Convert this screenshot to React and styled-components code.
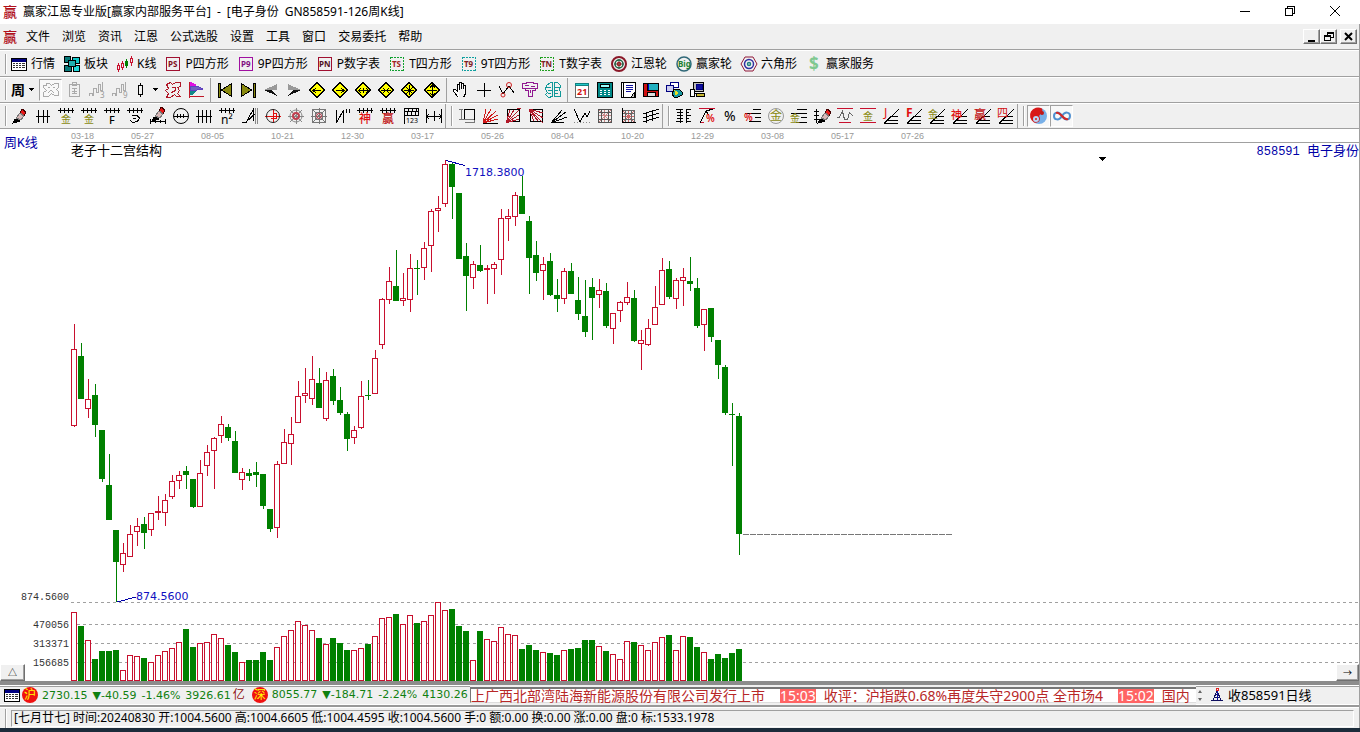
import React from 'react';
import styled, { createGlobalStyle, css } from 'styled-components';

const RED = '#c8102e';
const GREEN = '#008000';
const BLUE = '#0000a8';
const OLIVE = '#8a8a10';
const INK = '#000';
const GREY = '#a0a0a0';
const UI_FONT = '"Noto Sans", "Noto Sans CJK SC", sans-serif';
const MONO_FONT = '"Liberation Mono", "Noto Sans CJK SC", monospace';
const NUM_FONT = '"DejaVu Sans", "Noto Sans CJK SC", sans-serif';

const GlobalStyle = createGlobalStyle`
  *, *::before, *::after { box-sizing: border-box; }
  body { margin: 0; background: #1c2b3a; font-family: ${UI_FONT}; font-size: 12px; line-height: 16px; color: #000; }
  button { font: inherit; color: inherit; }
`;

/* ---------- frame ---------- */

const Frame = styled.div`
  display: flex;
  flex-direction: column;
  background: #f0f0f0;
`;

const Body = styled.div`
  border-right: 1px solid ${GREY};
`;

const TitleBar = styled.header`
  display: flex;
  align-items: center;
  height: 24px;
  padding: 0 3px;
  background: #fff;
`;

const Logo = styled.span`
  width: 20px;
  font-size: 14px;
  font-weight: 500;
  color: #b0101c;
`;

const Title = styled.h1`
  display: flex;
  flex: 1;
  gap: 6px;
  margin: 0;
  font-size: 12px;
  font-weight: 400;
  white-space: nowrap;
`;

const PlainButton = styled.button`
  display: inline-flex;
  align-items: center;
  justify-content: center;
  padding: 0;
  border: 0;
  background: none;
  white-space: nowrap;
`;

const WindowButton = styled(PlainButton)`
  width: 45px;
  height: 22px;
`;

const MenuBar = styled.nav`
  display: flex;
  align-items: center;
  height: 26px;
  padding: 0 2px 0 3px;
  border-bottom: 1px solid ${GREY};
`;

const MenuList = styled.div`
  display: flex;
  flex: 1;
  gap: 12px;
  padding-left: 3px;
`;

const ChildButtons = styled.div`
  display: flex;
  gap: 3px;
`;

const RaisedGroup = styled.div`
  display: flex;
`;

const RaisedButton = styled(PlainButton)`
  width: ${(p) => p.$w || 17}px;
  height: ${(p) => p.$h || 15}px;
  background: #f0f0f0;
  border: 1px solid;
  border-color: #fff #707070 #707070 #fff;
  box-shadow: inset -1px -1px 0 ${GREY};
`;

/* ---------- toolbars ---------- */

const ToolBar = styled.div`
  display: flex;
  align-items: center;
  height: ${(p) => p.$h || 26}px;
  padding-left: 5px;
  border-top: 1px solid #fff;
  border-bottom: 1px solid ${GREY};
`;

const Grip = styled.i`
  width: 2px;
  height: 20px;
  margin-right: ${(p) => p.$after || 1}px;
  border-left: 1px solid ${GREY};
  border-right: 1px solid #fff;
`;

const LabelButtons = styled.div`
  display: flex;
  gap: 8px;
`;

const LabelButton = styled(PlainButton)`
  gap: 3px;
`;

const ToolButton = styled(PlainButton)`
  width: 23px;
  height: 22px;
  ${(p) => p.$down && css`
    background: #f8f8f8;
    border: 1px solid;
    border-color: ${GREY} #fff #fff ${GREY};
  `}
`;

const DropButton = styled(PlainButton)`
  width: ${(p) => p.$w}px;
  height: 22px;
  justify-content: flex-start;
  gap: 3px;
  font-size: 14px;
  font-weight: 700;
`;

const Separator = styled.i`
  width: 6px;
  height: 24px;
  padding-left: 3px;
  &::after { content: ''; display: block; height: 100%; border-left: 1px solid ${GREY}; }
`;

const BandBreak = styled.span`
  display: flex;
  align-items: center;
  justify-content: space-between;
  width: 10px;
  height: 24px;
  border-left: 1px solid ${GREY};
  padding: 0 1px 0 5px;
  &::after { content: ''; width: 2px; height: 20px; border-left: 1px solid ${GREY}; border-right: 1px solid #fff; }
`;

const Glyph = styled.svg`
  flex: none;
  overflow: visible;
`;

/* ---------- chart ---------- */

const ChartPanel = styled.main`
  position: relative;
  background: #fff;
`;

const ChartSvg = styled.svg`
  display: block;
  width: 100%;
  height: 552px;
`;

const Corner = styled(RaisedButton)`
  position: absolute;
  bottom: 0;
  font-size: 9px;
  ${(p) => (p.$right ? 'right: 0;' : 'left: 0;')}
`;

/* ---------- status rows ---------- */

const QuoteBar = styled.section`
  display: flex;
  align-items: stretch;
  height: 26px;
  border-top: 4px solid #8c8c8c;
  border-bottom: 2px solid #999;
  overflow: hidden;
`;

const QuoteCell = styled.div`
  display: flex;
  align-items: center;
  width: ${(p) => p.$w}px;
  padding-left: ${(p) => p.$pad}px;
  border-top: 1px solid #fff;
  border-bottom: 1px solid #fff;
  box-shadow: inset 0 1px 0 ${GREY};
  overflow: hidden;
  white-space: nowrap;
`;

const Market = styled.span`
  display: inline-flex;
  align-items: center;
  justify-content: center;
  flex: none;
  width: 16px;
  height: 16px;
  margin: 0 4px 0 ${(p) => p.$before}px;
  border-radius: 50%;
  background: #f01010;
  color: #ff0;
  font-size: 12px;
`;

const Quote = styled.span`
  display: flex;
  flex: none;
  align-items: baseline;
  gap: 5px;
  font-family: ${NUM_FONT};
  font-size: 11px;
  color: #108010;
`;

const Unit = styled.span`
  margin-left: 2px;
  font-size: 12px;
  color: #901010;
`;

const Ticker = styled.div`
  display: flex;
  flex: 1;
  align-items: center;
  min-width: 0;
  margin: 2px 0;
  background: #fff;
  border-top: 2px solid #777;
  border-left: 1px solid #777;
  border-bottom: 1px solid #ddd;
  font-size: 14px;
  line-height: 14px;
  color: #b82828;
  white-space: nowrap;
`;

const News = styled.a`
  color: inherit;
  text-decoration: none;
  margin-right: 15px;
`;

const Time = styled.time`
  margin-right: 8px;
  background: #ff6464;
  color: #fff;
`;

const Feed = styled.span`
  margin-left: 2px;
  font-size: 13px;
`;

const InfoBar = styled.footer`
  display: flex;
  align-items: center;
  height: 21px;
  padding: 2px 5px 1px;
  border-top: 1px solid #fff;
`;

const InfoText = styled.div`
  flex: 1;
  height: 17px;
  margin-left: 3px;
  padding-left: 2px;
  border: 1px solid;
  border-color: ${GREY} #fff #fff ${GREY};
  line-height: 14px;
  white-space: pre;
`;

const Edge = styled.div`
  height: 4px;
  background: #1c2b3a;
`;

/* ---------- icons: strokes [colour, path, fill] and letters [text, x, y, size, colour] ---------- */

const COMB = [INK, 'M1 3.5H17M3.5 1V6M7.5 1V6M11.5 1V6M15.5 1V6'];
const FAN = [INK, 'M2 16.5H16M5 13.5H16M9 9.5H16M2 16.5L17 2'];
const diamond = ['#000', 'M9 1.5L16.5 9L9 16.5L1.5 9Z', '#ff0'];
const pencil = (dx, dy) => [
  [`#400`, `M${11 + dx} ${1 + dy}L${15 + dx} ${4 + dy}L${13 + dx} ${8 + dy}L${9 + dx} ${5 + dy}Z`, '#e81818'],
  ['#777', `M${9 + dx} ${5 + dy}L${13 + dx} ${8 + dy}L${10 + dx} ${12 + dy}L${5 + dx} ${10 + dy}Z`, '#d8b8b8'],
  ['#000', `M${4 + dx} ${11 + dy}L${9 + dx} ${13 + dy}L${2 + dx} ${15 + dy}Z`, '#000'],
];

const ICONS = {
  grid: { s: [['#000', 'M1.5 3.5H16.5V15.5H1.5Z', '#fff'], ['#000080', 'M2 5H16', 'none'], ['#000080', 'M2 4.5H16M2 5.5H16M2 6.5H16'], ['#333', 'M3 8.5H5M6 8.5H8M9 8.5H11M12 8.5H15M3 10.5H5M6 10.5H8M9 10.5H11M12 10.5H15M3 12.5H5M6 12.5H8M9 12.5H11M12 12.5H15']] },
  blocks: { s: [['#000', 'M1.5 1.5H7.5V7.5H1.5Z', '#087878'], ['#000', 'M9.5 2.5H16.5V8.5H9.5Z', '#10c8c8'], ['#000', 'M1.5 10.5H8.5V16.5H1.5Z', '#087878'], ['#000', 'M10.5 10.5H16.5V16.5H10.5Z', '#20d8d8'], ['#000', 'M5.5 5.5H12.5V11.5H5.5Z', '#20b0b0']] },
  kline: { s: [[RED, 'M2.5 8V17M6.5 6V15'], [RED, 'M1.5 10.5H3.5V14.5H1.5ZM5.5 8.5H7.5V12.5H5.5Z', '#f0f0f0'], [GREEN, 'M10.5 4V13M9.5 6.5H11.5V10.5H9.5Z'], [RED, 'M15.5 1V11'], [RED, 'M14.5 3.5H16.5V7.5H14.5Z', '#f0f0f0']] },
  PS: { s: [['#a01030', 'M2.5 2.5H15.5V15.5H2.5Z']], t: [['PS', 4, 12, 8, '#801020', 700]] },
  P9: { s: [['#a010a0', 'M2.5 2.5H15.5V15.5H2.5Z']], t: [['P9', 4, 12, 8, '#801080', 700]] },
  PN: { s: [['#a01030', 'M2.5 2.5H15.5V15.5H2.5Z']], t: [['PN', 3, 12, 8, '#501020', 700]] },
  TS: { s: [['#10a030', 'M2.5 2.5H15.5V15.5H2.5Z', 'none', '2 1']], t: [['TS', 4, 12, 8, '#a02020', 700]] },
  T9: { s: [['#10a0a0', 'M2.5 2.5H15.5V15.5H2.5Z', 'none', '2 1']], t: [['T9', 4, 12, 8, '#802020', 700]] },
  TN: { s: [['#20a020', 'M2.5 2.5H15.5V15.5H2.5Z', 'none', '2 1']], t: [['TN', 3, 12, 8, '#802020', 700]] },
  wheel: { smooth: 1, c: [[9, 9, 7, '#8a1828', 2], [9, 9, 4, '#206040', 1.5], [9, 9, 1.5, '#a02020', 1.5]], s: [['#555', 'M9 4V14M4 9H14']] },
  big: { smooth: 1, c: [[9, 9, 7, '#306878', 1.5]], t: [['Big', 3, 12, 8, '#208030', 700]] },
  hex: { smooth: 1, s: [['#901838', 'M5 2H13L17 9L13 16H5L1 9Z']], c: [[9, 9, 4.5, '#3030a0', 1.5], [9, 9, 1.5, '#208080', 1.5]] },
  dollar: { t: [['$', 4, 15, 17, '#80c890', 700]] },

  knot: { s: [['#aaa', 'M4.5 2.5H7.5L9.5 4.5L12.5 2.5H16.5V6.5L14.5 8.5L16.5 10.5V14.5H12.5L9.5 12.5L6.5 15.5H1.5V11.5L4.5 9.5L1.5 6.5V4.5H4.5ZM6 6.5H8M11 6.5H13M6 11.5L9 9.5L12 11.5']] },
  clip: { s: [['#aaa', 'M4.5 3.5H14.5V15.5H4.5ZM7.5 1.5H11.5V4.5H7.5ZM7 7.5H12M7 10.5H12M9.5 7V13M7 12.5H12']] },
  wave3: { s: [['#aaa', 'M1.5 15V12.5H4.5V15M5.5 15V7.5H8.5V11.5H10.5V3.5H12.5V9.5H14.5V1']], t: [['3', 12, 17, 8, '#999']] },
  wave9: { s: [['#aaa', 'M1.5 15V12.5H4.5V15M5.5 15V7.5H8.5V11.5H10.5V3.5H12.5V9.5H14.5V1']], t: [['9', 12, 17, 8, '#999']] },
  candle: { s: [[INK, 'M9.5 2V16'], [INK, 'M7.5 4.5H11.5V13.5H7.5Z', '#f0f0f0']] },
  knotRed: { s: [['#b01828', 'M2.5 3.5L6.5 1.5L8.5 3.5L11.5 1.5H16.5V5.5L13.5 6.5L15.5 9.5L13.5 12.5L16.5 15.5H12.5L10.5 13.5L6.5 16.5H2.5L4.5 12.5L1.5 9.5L4.5 7.5ZM8 6.5H11.5V9.5L7.5 11.5']] },
  flag: { s: [['#e010e0', 'M3 1L9 4H3Z', '#e010e0'], ['#6040c0', 'M3 5H10L16 8L10 9H3Z', '#7060c0'], ['#108888', 'M3 10H9L6 13H3Z', '#108888'], ['#c01828', 'M2.5 1V17M2 15.5H17']] },
  first: { s: [[INK, 'M2 2H4V16H2Z', OLIVE], [INK, 'M15.5 2.5V15.5L5.5 9Z', OLIVE]] },
  last: { s: [[INK, 'M14 2H16V16H14Z', OLIVE], [INK, 'M2.5 2.5V15.5L12.5 9Z', OLIVE]] },
  prev: { f: [['#999', 'M15 3L2 9H15Z'], ['#111', 'M15 15L2 9H10Z']] },
  next: { f: [['#999', 'M3 3L16 9H3Z'], ['#111', 'M3 15L16 9H8Z']] },
  dLeft: { s: [diamond, [INK, 'M5 9.5H13M8 7L5 9.5L8 12']] },
  dRight: { s: [diamond, [INK, 'M5 9.5H13M10 7L13 9.5L10 12']] },
  dBoth: { s: [diamond, [INK, 'M4 9.5H14M7 7L5 9.5L7 12M12 7L14 9.5L12 12M9.5 7V12']] },
  dIn: { s: [diamond, [INK, 'M4 9.5H14M6 7L8 9.5L6 12M12 7L10 9.5L12 12']] },
  dStar: { s: [diamond, [INK, 'M4 9.5H14M9.5 4V14M6 6L13 13M13 6L6 13']] },
  dCross: { s: [diamond, [INK, 'M4 9.5H14M9.5 4V14M7 6.5L9.5 4L12 6.5M7 12L9.5 14L12 12']] },
  hand: { s: [[INK, 'M6.5 16.5L1.5 10.5V8.5H3.5L5.5 10.5V3.5H7.5V8.5M7.5 3V1.5H9.5V8M9.5 2.5H11.5V8M11.5 4.5H13.5V12.5L11.5 16.5', '#fff']] },
  plus: { s: [[INK, 'M9.5 2V16M2 9.5H16']] },
  peaks: { s: [[INK, 'M1 5L5 13L11 5L16 12']], c: [[5, 14, 2, '#d02020', 1], [11, 4, 2.5, '#d02020', 1]] },
  cloudP: { s: [['#901890', 'M1.5 2.5H5.5V1.5H12.5V2.5H16.5V7.5H14.5V9.5H11.5V15.5H7.5V9.5H4.5V7.5H1.5ZM4 4.5H8M10 5.5H14M4 7.5H14M9.5 9V12']] },
  cloudC: { s: [['#109898', 'M2.5 4.5L6.5 1.5H8.5V15.5L4.5 16.5L1.5 13.5L3.5 11.5L1.5 8.5ZM10.5 15.5V1.5H13.5L16.5 4.5L15.5 8.5L16.5 11.5V15.5ZM3 6.5H7M11 6.5H15M4 9.5H8M4 12.5H7M11 9.5H14M11 12.5H14']] },
  calendar: { s: [['#666', 'M2.5 3.5H15.5V16.5H2.5Z', '#fff'], ['#108080', 'M2.5 2.5H15.5V4.5H2.5Z', '#20c8c8']], t: [['21', 4, 14, 9, '#d01010', 700]] },
  calc: { s: [[INK, 'M1.5 1.5H16.5V16.5H1.5Z', '#088'], [INK, 'M4.5 3.5H13.5V6.5H4.5Z', '#9ff'], ['#fff', 'M4 9.5H6M8 9.5H10M12 9.5H14M4 11.5H6M8 11.5H10M12 11.5H14M4 13.5H6M8 13.5H10M12 13.5H14']] },
  note: { s: [[INK, 'M2.5 1.5H16.5V16.5H2.5Z', '#fff'], [INK, 'M4.5 2V16'], ['#1010a0', 'M7 4.5H14M7 6.5H14M7 8.5H14M7 10.5H12'], [INK, 'M15 16L12 16L15 12Z', '#ccc']] },
  save: { s: [[INK, 'M1.5 2.5H16.5V15.5H1.5Z', '#d01010'], ['#000', 'M5.5 2.5H16.5V9.5H5.5Z', '#20b0c0'], [INK, 'M5.5 11.5H13.5V15.5H5.5Z', '#ddd'], ['#0000c0', 'M6.5 3V9']] },
  net: { s: [['#000080', 'M5.5 1.5H13.5V6.5H5.5Z', '#fff'], ['#000080', 'M1.5 4.5H8.5V10.5H1.5Z', '#cce'], [INK, 'M9 8H14L17 11V14L13 16H9L7 13Z', '#1898a0'], ['#e8e020', 'M10 10L13 12L11 14Z', '#e8e020']] },
  pc: { s: [[INK, 'M5.5 1.5H15.5V10.5H5.5Z', '#bbb'], ['#000080', 'M8 3H14V8H8Z', '#1010a0'], [INK, 'M2.5 8.5H6.5V15.5H2.5Z', '#fff'], [INK, 'M8 12.5H16V15.5H9Z', '#c8b830']] },

  pencil: { s: pencil(0, 1) },
  ticks: { s: [[INK, 'M2 9.5H16M4.5 3V16M9.5 3V16M13.5 3V16']] },
  combGold: { s: [COMB], t: [['金', 4, 16, 10, OLIVE]] },
  combF: { s: [COMB], t: [['F', 6, 17, 11, INK, 500]] },
  combSpiral: { s: [COMB, [INK, 'M6 8.5H11L13.5 11L11.5 14.5L7 15.5L4 13.5M7 11.5H10']] },
  pencilRule: { s: [...pencil(1, -1), [INK, 'M1 14.5H17M1.5 12V17M16.5 12V17M6.5 13V16M11.5 13V16']] },
  dial: { c: [[9, 9, 7.5, INK, 1]], s: [[INK, 'M2 9.5H16M5.5 7V11M8.5 7V11M11.5 7V11']] },
  ticks4: { s: [[INK, 'M1 9.5H17M3.5 3V16M7.5 3V16M11.5 3V16M15.5 3V16']] },
  combN2: { s: [COMB], t: [['n²', 3, 17, 12, INK]] },
  angles: { s: [[INK, 'M1 15.5H5L12 3V14M5 15L15 6'], ['#888', 'M14.5 1V17M16.5 1V17']] },
  spiralRed: { c: [[9, 9, 6.5, '#222', 1]], s: [['#e01010', 'M1 9.5H17M9.5 2V16M9 6.5H12.5V11.5H7']] },
  webRound: { c: [[9, 9, 6, '#888', 1], [9, 9, 3, '#c04050', 2]], s: [['#888', 'M1 9.5H17M9.5 1V17M3 3L15 15M15 3L3 15']] },
  webSquare: { s: [['#777', 'M2.5 2.5H15.5V15.5H2.5ZM5.5 5.5H12.5V12.5H5.5ZM1 9.5H17M9.5 1V17M2 2L16 16M16 2L2 16']], c: [[9, 9, 2.5, '#c04050', 1]] },
  fork: { s: [[INK, 'M3.5 3V16L10.5 3V16M13.5 2V6M16.5 2V6']] },
  combShen: { s: [COMB], t: [['神', 3, 16, 12, '#e01010', 500]] },
  combYing: { s: [COMB], t: [['赢', 3, 16, 12, '#c01010', 500]] },
  comb123: { s: [[INK, 'M2 1.5H17M2.5 1V17M2 4.5H17M6.5 1V4M10.5 1V4M14.5 1V4M2 8.5H17M5.5 5V8M9.5 5V8M13.5 5V8M16.5 1V9']], t: [['123', 4, 16, 7, INK]] },
  span: { s: [[INK, 'M1.5 2V16M9.5 4V14M16.5 2V16M1 9.5H17M4 7L2 9.5L4 12M14 7L16 9.5L14 12']] },

  boxRule: { s: [[INK, 'M6.5 2.5H16.5V12.5H6.5Z'], ['#777', 'M1 2.5H5M3.5 2V13M1 12.5H16M7 15.5H16M16.5 13V16']] },
  fanRed: { s: [['#d01818', 'M2 16L5 2M2 16L10 2M2 16L15 4M2 16L17 8M2 16L17 12'], [INK, 'M2 16.5H17']] },
  fanBox: { s: [[INK, 'M3.5 2.5H15.5V14.5H3.5Z'], ['#b01828', 'M2 16L6 3M2 16L10 3M2 16L15 3M2 16L15 8M2 16L15 12'], ['#b01828', 'M13 2L17 1']] },
  fanBox2: { s: [[INK, 'M3.5 2.5H15.5V14.5H3.5Z'], ['#b01828', 'M2 2L16 16M2 2L16 11M2 2L16 6M2 2L11 14M2 2L7 14']] },
  fan: { s: [[INK, 'M1 16L12 3M1 16L16 5M1 16L17 10M1 15.5H14']] },
  zig: { s: [[INK, 'M1 2L7 15L12 6L14 10L17 4'], ['#888', 'M1 15.5H17', 'none', '1 2']] },
  gridRed: { s: [['#c88', 'M2 2L16 16M16 2L2 16M8.5 2V16M2 8.5H16'], ['#555', 'M2.5 2.5H15.5V15.5H2.5ZM5.5 2V16M12.5 2V16M2 5.5H16M2 12.5H16']] },
  gridRed2: { s: [['#c66', 'M3 3L16 16M16 3L3 16M9.5 3V15M3 9.5H16'], ['#666', 'M6.5 3V15M12.5 3V15M15.5 3V15M3 3.5H16M3 6.5H16M3 12.5H16'], [INK, 'M3.5 1V15.5H17']] },
  channels: { s: [[INK, 'M1 7L17 2M1 11L17 6M1 15L17 10M4.5 5V16M10.5 3V14']] },

  ladder: { s: [[INK, 'M5.5 2V16M11.5 2V16M1 2.5H8M2 5.5H8M2 8.5H8M2 11.5H8M1 14.5H8M11 2.5H16M11 5.5H14M11 8.5H16M11 11.5H14M11 14.5H16']] },
  pctA: { s: [[RED, 'M1 1.5H17M3 15.5H6'], [INK, 'M2 16L8 4L11 8M8 4L15 2']], t: [['%', 8, 15, 10, '#e01010', 600]] },
  pct: { t: [['%', 3, 14, 14, INK]] },
  pctLines: { s: [[INK, 'M9 2.5H17M1 6.5H17M11 10.5H17M5 14.5H17']], t: [['%', 0, 14, 10, '#e01010', 600]] },
  goldRound: { c: [[9, 9, 7.5, '#999', 1]], t: [['金', 3, 13, 12, OLIVE]] },
  goldLines: { s: [[INK, 'M7 2.5H17M1 6.5H17M11 10.5H17M6 15.5H17']], t: [['金', 0, 15, 10, OLIVE]] },
  rulePencil: { s: [[INK, 'M3.5 2V16M1 4.5H6M1 8.5H6M1 12.5H6'], ...pencil(3, 1)] },
  waveLines: { s: [[RED, 'M1 1.5H17M3 15.5H15'], ['#666', 'M1 10.5H3L6.5 4.5L8.5 12.5L11.5 12.5L13.5 5.5L17 9']] },
  goldRed: { s: [[RED, 'M1 1.5H17M1 15.5H17']], t: [['金', 4, 13, 10, OLIVE]] },
  fanJ: { s: [FAN], t: [['J', 2, 10, 12, '#e01010']] },
  fanF: { s: [FAN], t: [['F', 1, 10, 12, '#e01010', 700]] },
  fanGold: { s: [FAN], t: [['金', 0, 11, 10, OLIVE]] },
  fanShen: { s: [FAN], t: [['神', 0, 12, 11, '#e01010', 500]] },
  fanYing: { s: [FAN], t: [['赢', 0, 12, 12, '#c01010', 500]] },
  fanSi: { s: [FAN], t: [['四', 0, 10, 11, '#d01010']] },
  taiji: { smooth: 1, f: [['#78b0e8', 'M9 1A8 8 0 0 1 9 17A8 8 0 0 1 9 1Z'], ['#d81818', 'M12 1.5A8 8 0 0 0 4 15.5C9 17 11 12 9.500 10C8 7.500 14 6 12 1.500Z']], c: [[6, 12, 2, '#b8d8f8', 2], [12, 6, 1, '#c01818', 2]] },
  infinity: { smooth: 1, w: 2, s: [['#5090d0', 'M9 9C6 4 1 5 1 9S6 14 9 9'], ['#5090d0', 'M9 9C12 4 17 5 17 9S12 14 9 9'], ['#d02828', 'M3 6C8 4 10 14 15 12']] },

  min: { s: [[INK, 'M4 8.5H14']] },
  restore: { s: [[INK, 'M4.5 5.5H11.5V12.5H4.5ZM6.5 5V3.5H13.5V10.5H12']] },
  close: { smooth: 1, s: [[INK, 'M4 3L14 13M14 3L4 13']] },
  minSmall: { w: 2, s: [[INK, 'M5 13H12']] },
  restoreSmall: { s: [[INK, 'M4.5 7.5H10.5V12.5H4.5ZM4 8.5H11M7.5 7V4.5H13.5V9.5H11M7 5.5H14']] },
  closeSmall: { w: 2, smooth: 1, s: [[INK, 'M5 5L12 12M12 5L5 12']] },
  tower: { s: [['#101060', 'M9 5L5 14M9 5L13 14M6 11.5H12M7 8.5H11M3 14.5H15'], ['#e02020', 'M8 2H10V4H8Z'], ['#1010a0', 'M9.5 5V14']] },
  caret: { f: [[INK, 'M1 7H6L3.5 10Z']] },
};
ICONS.combGold2 = ICONS.combGold;

function Icon({ name, width = 18 }) {
  const { s = [], c = [], t = [], f = [], smooth, w = 1 } = ICONS[name];
  return (
    <Glyph width={width} height="18" viewBox={`0 0 ${width} 18`} aria-hidden="true" shapeRendering={smooth ? 'auto' : 'crispEdges'}>
      {f.map(([fill, d], i) => <path key={i} d={d} fill={fill} />)}
      {s.map(([stroke, d, fill = 'none', dash], i) => (
        <path key={i} d={d} stroke={stroke} fill={fill} strokeDasharray={dash} strokeWidth={w} />
      ))}
      {c.map(([cx, cy, r, stroke, sw], i) => (
        <circle key={i} cx={cx} cy={cy} r={r} stroke={stroke} strokeWidth={sw} fill="none" shapeRendering="auto" />
      ))}
      {t.map(([text, x, y, fs, fill, fw], i) => (
        <text key={i} x={x} y={y} fontSize={fs} fill={fill} fontWeight={fw || 400}>{text}</text>
      ))}
    </Glyph>
  );
}

const Tools = ({ names, down }) => names.map((n) => (
  <ToolButton key={n} type="button" aria-label={n} $down={down || n === 'knot'}><Icon name={n} /></ToolButton>
));

/* ---------- data ---------- */

const MENU = ['文件', '浏览', '资讯', '江恩', '公式选股', '设置', '工具', '窗口', '交易委托', '帮助'];

const VIEWS = [
  ['grid', '行情'], ['blocks', '板块'], ['kline', 'K线'], ['PS', 'P四方形'], ['P9', '9P四方形'], ['PN', 'P数字表'],
  ['TS', 'T四方形'], ['T9', '9T四方形'], ['TN', 'T数字表'], ['wheel', '江恩轮'], ['big', '赢家轮'], ['hex', '六角形'], ['dollar', '赢家服务'],
];

const DATES = [['03-18', 71], ['05-27', 131], ['08-05', 201], ['10-21', 271], ['12-30', 341], ['03-17', 411], ['05-26', 481],
  ['08-04', 551], ['10-20', 621], ['12-29', 691], ['03-08', 761], ['05-17', 831], ['07-26', 901]];

const LEVELS = [['874.5600', 602, 600], ['470056', 624, 628], ['313371', 643, 647], ['156685', 662, 666]];

/* direction, high, body top, body bottom, low, volume top */
const BARS = `r 324 349 426 427 612|g 343 356 399 399 626|r 379 399 409 418 640|g 384 395 425 437 659|g 430 430 479 482 651|g 454 485 520 520 651
g 530 530 562 602 650|r 543 553 565 572 670|r 525 534 557 557 655|r 518 526 532 546 656|g 517 524 533 549 658|r 513 513 530 536 662
r 496 511 513 520 655|r 494 500 513 526 651|r 475 481 497 499 648|r 471 475 481 489 642|g 466 471 475 489 629|g 479 479 507 508 647
r 460 473 507 507 643|r 445 452 466 476 642|r 437 438 451 489 634|r 416 424 436 443 638|g 424 427 438 441 645|g 431 441 473 473 652
r 468 472 480 490 662|g 469 473 476 481 660|g 462 472 475 487 660|g 474 474 506 509 652|g 509 509 529 532 660|r 461 464 528 538 647
r 429 442 464 464 636|r 417 434 444 465 630|r 381 396 423 423 621|r 368 393 396 403 625|r 356 379 399 405 630|g 368 383 408 408 638
r 372 380 419 421 644|g 369 376 401 405 638|g 387 400 413 415 643|g 412 414 439 451 650|r 426 430 438 444 650|r 381 396 428 429 648
g 380 395 396 400 644|r 350 358 394 394 636|r 298 299 345 349 618|r 267 281 300 304 617|g 250 286 301 301 614|r 273 298 301 306 624
r 254 268 300 312 615|g 260 268 269 295 623|r 242 248 268 280 621|r 209 211 246 272 615|r 196 208 211 232 602|r 160 164 204 207 610
g 163 164 187 219 609|g 193 193 259 259 626|g 243 256 276 311 631|r 261 264 278 289 660|g 245 265 271 272 631|r 265 268 270 304 639
r 262 264 269 294 641|r 209 218 260 275 627|r 209 216 219 241 634|r 192 195 217 226 635|g 176 196 214 214 649|g 216 221 258 294 645
g 241 255 273 281 650|r 257 264 271 300 652|g 253 261 295 296 653|g 279 295 299 312 655|r 268 271 299 304 650|g 263 271 294 294 649
g 277 300 314 320 648|g 280 316 332 337 640|g 278 287 298 340 640|r 279 290 295 308 646|g 283 291 326 328 651|r 313 313 329 344 654
r 301 302 311 322 659|r 282 297 303 305 641|g 290 298 341 342 642|r 330 340 344 370 645|r 319 328 345 346 650|r 286 307 325 325 642
r 258 270 305 305 637|g 261 269 297 299 635|r 278 280 299 309 650|r 268 277 281 306 636|g 257 281 284 291 637|g 278 288 326 328 647
r 309 309 325 351 652|g 308 308 337 342 659|g 340 340 365 379 654|g 365 367 413 415 658|g 403 414 415 466 653|g 413 416 534 555 649`
  .split(/[|\n]/)
  .map((row) => row.trim().split(' '))
  .map(([dir, ...v]) => ({ up: dir === 'r', v: v.map(Number) }));

const BASE = 681;

function Bar({ x, top, bottom, up }) {
  const h = bottom - top;
  return up && h > 2
    ? <rect x={x + 0.5} y={top + 0.5} width={5} height={h - 1} fill="#fff" stroke={RED} />
    : <rect x={x} y={top} width={6} height={h} fill={up ? RED : GREEN} />;
}

function Chart() {
  return (
    <ChartSvg role="img" aria-label="周K线">
      <g transform="translate(0 -129)" shapeRendering="crispEdges">
        {DATES.map(([d, x]) => (
          <text key={d} x={x} y={139} fontFamily="Liberation Sans, sans-serif" fontSize="9" fill="#999">{d}</text>
        ))}
        <line x1="71" x2="100%" y1="142.5" y2="142.5" stroke={GREY} />
        {LEVELS.map(([label, y, ty]) => (
          <g key={label}>
            <line x1="71" x2="100%" y1={y + 0.5} y2={y + 0.5} stroke={GREY} strokeDasharray="3 3" />
            <text x="69" y={ty} textAnchor="end" fontFamily={MONO_FONT} fontSize="10" fill="#333">{label}</text>
          </g>
        ))}
        {BARS.map(({ up, v: [high, top, bottom, low, vol] }, i) => {
          const x = 71 + i * 7;
          return (
            <g key={i}>
              <rect x={x + 3} y={high} width={1} height={low - high} fill={up ? RED : GREEN} />
              <Bar x={x} top={top} bottom={bottom} up={up} />
              <Bar x={x} top={vol} bottom={BASE} up={up} />
            </g>
          );
        })}
        <line x1="743" x2="952" y1="534.5" y2="534.5" stroke="#777" strokeDasharray="6 1" />
        <path d="M446 160.5L465 165.5M117 602L136 597" stroke={BLUE} fill="none" />
        <text x="465" y="176" fontFamily={NUM_FONT} fontSize="11" fill="#1010c0">1718.3800</text>
        <text x="136" y="600" fontFamily={NUM_FONT} fontSize="11" fill="#1010c0">874.5600</text>
        <path d="M1098 157H1107L1102.5 161Z" fill={INK} />
        <g fontFamily={MONO_FONT} fontSize="13">
          <text x="4" y="147" fill={BLUE}>周K线</text>
          <text x="71" y="155" fill={INK}>老子十二宫结构</text>
          <text x="100%" y="155" textAnchor="end" fill={BLUE}><tspan fontSize="12">858591 </tspan>电子身份</text>
        </g>
      </g>
    </ChartSvg>
  );
}

export default function App() {
  return (
    <>
      <GlobalStyle />
      <Frame>
        <TitleBar>
          <Logo>赢</Logo>
          <Title>
            <span>赢家江恩专业版[赢家内部服务平台]</span>
            <span>-</span>
            <span>[电子身份</span>
            <span>GN858591-126周K线]</span>
          </Title>
          {['min', 'restore', 'close'].map((n) => (
            <WindowButton key={n} type="button" aria-label={n}><Icon name={n} /></WindowButton>
          ))}
        </TitleBar>
        <Body>
          <MenuBar>
            <Logo>赢</Logo>
            <MenuList>{MENU.map((m) => <PlainButton key={m} type="button">{m}</PlainButton>)}</MenuList>
            <ChildButtons>
              <RaisedGroup>
                <RaisedButton type="button" aria-label="min"><Icon name="minSmall" /></RaisedButton>
                <RaisedButton type="button" aria-label="restore"><Icon name="restoreSmall" /></RaisedButton>
              </RaisedGroup>
              <RaisedButton type="button" aria-label="close"><Icon name="closeSmall" /></RaisedButton>
            </ChildButtons>
          </MenuBar>

          <ToolBar $h={27}>
            <Grip $after={3} />
            <LabelButtons>
              {VIEWS.map(([icon, label]) => (
                <LabelButton key={label} type="button"><Icon name={icon} />{label}</LabelButton>
              ))}
            </LabelButtons>
          </ToolBar>

          <ToolBar>
            <Grip $after={4} />
            <DropButton type="button" $w={28}>周<Icon name="caret" width={8} /></DropButton>
            <Tools names={['knot', 'clip', 'wave3', 'wave9']} />
            <DropButton type="button" aria-label="candle" $w={30}><Icon name="candle" /><Icon name="caret" width={8} /></DropButton>
            <Tools names={['knotRed', 'flag']} />
            <Separator />
            <Tools names={['first', 'last', 'prev', 'next', 'dLeft', 'dRight', 'dBoth', 'dIn', 'dStar', 'dCross']} />
            <Separator />
            <Tools names={['hand', 'plus', 'peaks', 'cloudP', 'cloudC']} />
            <Separator />
            <Tools names={['calendar', 'calc', 'note', 'save', 'net', 'pc']} />
          </ToolBar>

          <ToolBar>
            <Grip />
            <Tools names={['pencil', 'ticks', 'combGold', 'combGold2', 'combF', 'combSpiral', 'pencilRule', 'dial', 'ticks4', 'combN2', 'angles', 'spiralRed', 'webRound', 'webSquare', 'fork', 'combShen', 'combYing', 'comb123', 'span']} />
            <BandBreak />
            <Tools names={['boxRule', 'fanRed', 'fanBox', 'fanBox2', 'fan', 'zig', 'gridRed', 'gridRed2', 'channels']} />
            <BandBreak />
            <Tools names={['ladder', 'pctA', 'pct', 'pctLines', 'goldRound', 'goldLines', 'rulePencil', 'waveLines', 'goldRed', 'fanJ', 'fanF', 'fanGold', 'fanShen', 'fanYing', 'fanSi']} />
            <BandBreak />
            <Tools names={['taiji', 'infinity']} down />
          </ToolBar>

          <ChartPanel>
            <Chart />
            <Corner type="button" $w={25} $h={17}>△</Corner>
            <Corner type="button" $w={23} $h={17} $right>→</Corner>
          </ChartPanel>

          <QuoteBar>
            <QuoteCell $w={470} $pad={3}>
              <Icon name="grid" />
              <Market $before={1}>沪</Market>
              <Quote><span>2730.15</span><span>▼-40.59</span><span>-1.46%</span><span>3926.61<Unit>亿</Unit></span></Quote>
              <Market $before={7}>深</Market>
              <Quote><span>8055.77</span><span>▼-184.71</span><span>-2.24%</span><span>4130.26</span></Quote>
            </QuoteCell>
            <Ticker>
              <News href="#n1">上广西北部湾陆海新能源股份有限公司发行上市</News>
              <Time>15:03</Time>
              <News href="#n2">收评：沪指跌0.68%再度失守2900点 全市场4</News>
              <Time>15:02</Time>
              <News href="#n3">国内</News>
            </Ticker>
            <QuoteCell $w={163} $pad={0}>
              <svg width="12" height="14" aria-hidden="true"><path d="M2 5L4 2L6 5ZM2 10L4 13L6 10Z" fill="#666" /></svg>
              <Icon name="tower" />
              <Feed>收858591日线</Feed>
            </QuoteCell>
          </QuoteBar>

          <InfoBar>
            <Grip />
            <InfoText>[七月廿七] 时间:20240830 开:1004.5600 高:1004.6605 低:1004.4595 收:1004.5600 手:0 额:0.00 换:0.00 涨:0.00 盘:0 标:1533.1978</InfoText>
          </InfoBar>
        </Body>
        <Edge />
      </Frame>
    </>
  );
}
